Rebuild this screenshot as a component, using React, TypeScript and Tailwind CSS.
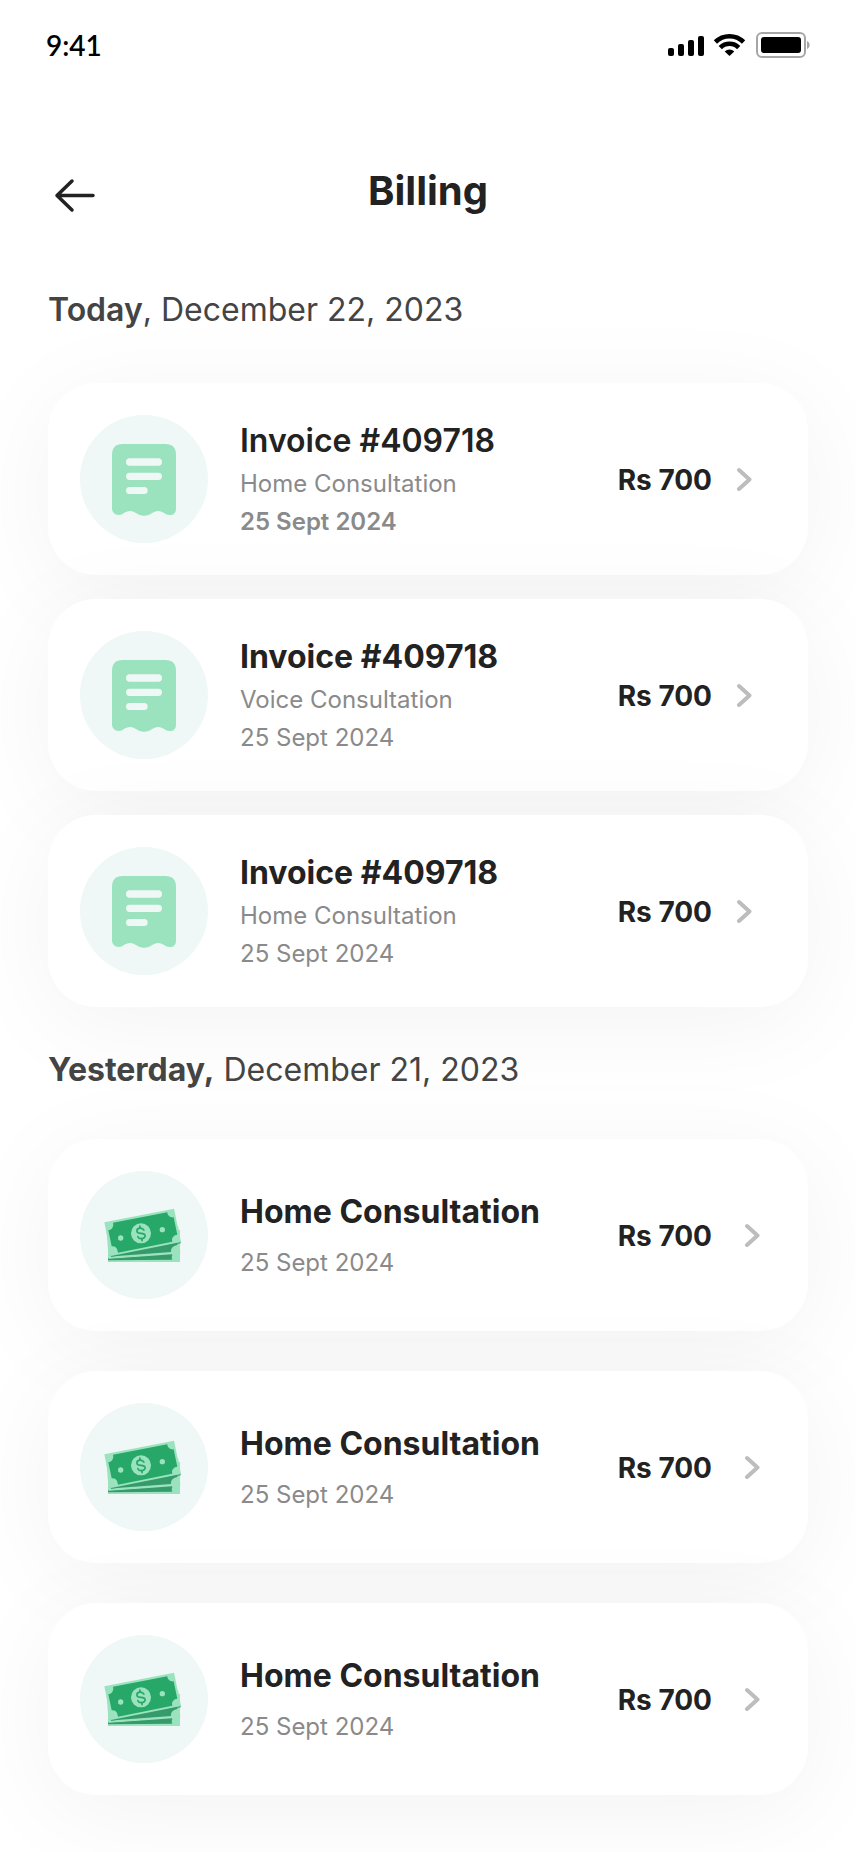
import React from "react";

type Entry = {
  title: string;
  detail?: string;
  date: string;
  amount: string;
  unread?: boolean;
};

const today: Entry[] = [
  { title: "Invoice #409718", detail: "Home Consultation", date: "25 Sept 2024", amount: "Rs 700", unread: true },
  { title: "Invoice #409718", detail: "Voice Consultation", date: "25 Sept 2024", amount: "Rs 700" },
  { title: "Invoice #409718", detail: "Home Consultation", date: "25 Sept 2024", amount: "Rs 700" },
];

const yesterday: Entry[] = [
  { title: "Home Consultation", date: "25 Sept 2024", amount: "Rs 700" },
  { title: "Home Consultation", date: "25 Sept 2024", amount: "Rs 700" },
  { title: "Home Consultation", date: "25 Sept 2024", amount: "Rs 700" },
];

function ReceiptIcon() {
  return (
    <svg viewBox="-30 -15 384 384" className="size-32 shrink-0" aria-hidden="true">
      <circle cx="162" cy="177" r="192" fill="#eff8f6" />
      <path
        d="M98 72H226Q258 72 258 104V266C258 278 250 285 240 285C224 285 220 273 205 273C188 273 184 287 162 287C142 287 136 273 120 273C104 273 100 285 86 285C74 285 66 277 66 265V104Q66 72 98 72Z"
        fill="#9be3be"
      />
      <rect x="108" y="115" width="108" height="22" rx="11" fill="#eff8f6" />
      <rect x="108" y="158" width="108" height="22" rx="11" fill="#eff8f6" />
      <rect x="108" y="201" width="65" height="21" rx="10.5" fill="#eff8f6" />
    </svg>
  );
}

function CashIcon() {
  return (
    <svg viewBox="-30 -57 384 384" className="size-32 shrink-0" aria-hidden="true">
      <circle cx="162" cy="135" r="192" fill="#eff8f6" />
      <path d="M54 120H270V216H54Z" fill="#9be3be" />
      <path d="M54 205L248 196C245 199 244 204 247 209L54 211Z" fill="#369b6b" />
      <path d="M50 125L265 110L271 191L56 207Z" fill="#9be3be" />
      <path d="M72 199L243 186C242 176 248 168 262 165L262 155L72 190Z" fill="#369b6b" />
      <path d="M56 207L246 193V197L56 210Z" fill="#369b6b" />
      <path d="M62 196L272 155L272 160L64 201Z" fill="#369b6b" />
      <path d="M43 97L252 56L273 156L63 198Z" fill="#9be3be" />
      <path
        d="M69 98L232 67C232 76 241 84 251 82L262 134C250 136 244 144 247 155L84 188C83 175 75 166 65 169L55 121C66 119 72 109 69 98Z"
        fill="#27a868"
      />
      <circle cx="153" cy="130" r="30" fill="#9be3be" />
      <circle cx="92" cy="144" r="8" fill="#9be3be" />
      <circle cx="217" cy="119" r="8" fill="#9be3be" />
      <g fill="none" stroke="#27a868" strokeWidth="5" strokeLinecap="round" transform="rotate(-9 153 130)">
        <path d="M163 122C161 116 157 114 152 114C146 114 142 117 142 122C142 134 164 126 164 138C164 143 159 146 153 146C147 146 143 143 142 138" />
        <path d="M153 108V114M153 146V152" />
      </g>
    </svg>
  );
}

function Chevron() {
  return (
    <svg viewBox="0 0 16 24" className="h-6 w-4 shrink-0" fill="none" stroke="#bdbdbd" strokeWidth="4" strokeLinecap="round" strokeLinejoin="round" aria-hidden="true">
      <path d="M3 3L13.500 12.500L3 22" />
    </svg>
  );
}

function EntryCard({ entry, cash }: { entry: Entry; cash?: boolean }) {
  return (
    <li>
      <a
        href="#details"
        className={`flex items-center rounded-[48px] bg-white py-8 pl-8 shadow-[0_16px_100px_rgba(0,0,0,0.05)] ${cash ? "pr-12" : "pr-14"}`}
      >
        {cash ? <CashIcon /> : <ReceiptIcon />}
        <div className={`ml-8 flex min-w-0 flex-1 flex-col pt-0.5 ${cash ? "gap-2.5" : "gap-0.5"}`}>
          <h3 className={`text-[32px] leading-[44px] text-[#222222] ${entry.unread ? "font-semibold" : "font-bold"}`}>
            {entry.title}
          </h3>
          <div className="text-2xl leading-[38px] text-[#8a8a8a]">
            {entry.detail && <p>{entry.detail}</p>}
            <p className={entry.unread ? "font-semibold" : ""}>{entry.date}</p>
          </div>
        </div>
        <span className={`shrink-0 pt-0.5 text-[28px] leading-9 font-bold text-[#222222] ${cash ? "mr-8" : "mr-6"}`}>
          {entry.amount}
        </span>
        <Chevron />
      </a>
    </li>
  );
}

function StatusBar() {
  return (
    <div className="flex h-[90px] items-center justify-between px-[46px]">
      <span className="font-['Lato',sans-serif] text-[28px] leading-9 font-semibold text-black">9:41</span>
      <svg viewBox="0 0 144 30" className="h-[30px] w-36" role="img" aria-label="Signal, Wi-Fi and battery">
        <rect x="2" y="18" width="6" height="8" rx="2" />
        <rect x="12" y="14" width="6" height="12" rx="2" />
        <rect x="22" y="10" width="6" height="16" rx="2" />
        <rect x="32" y="6" width="6" height="20" rx="2" />
        <g fill="none" stroke="#000" strokeWidth="4.6">
          <path d="M49.400 12A20 20 0 0 1 77.600 12" />
          <path d="M54.300 17.500A13 13 0 0 1 72.700 17.500" />
        </g>
        <path d="M58.700 21.500A6.500 6.500 0 0 1 68.300 21.500L63.500 26Z" />
        <rect x="91" y="3" width="48" height="24" rx="5" fill="none" stroke="#a6a6a6" strokeWidth="2" />
        <rect x="95" y="7" width="40" height="16" rx="3" />
        <path d="M141 11C144.500 12.500 144.500 17.500 141 19Z" fill="#a6a6a6" />
      </svg>
    </div>
  );
}

export default function App() {
  return (
    <div className="min-h-screen overflow-hidden bg-white pb-14 font-['Inter',sans-serif]">
      <StatusBar />
      <header className="mt-[77px] grid grid-cols-[48px_1fr_48px] items-center px-12">
        <button type="button" aria-label="Back" className="size-12">
          <svg viewBox="0 0 48 48" className="size-12" fill="none" stroke="#222222" strokeWidth="3.5" strokeLinecap="round" strokeLinejoin="round" aria-hidden="true">
            <path d="M45 28.500H9M24 14L9 28.500L24 43" />
          </svg>
        </button>
        <h1 className="text-center text-[40px] leading-12 font-bold text-[#222222]">Billing</h1>
      </header>
      <main className="px-12">
        <section className="pt-[75px]">
          <h2 className="text-[32px] leading-10 font-normal text-[#444444]">
            <strong className="font-semibold">Today</strong>, December 22, 2023
          </h2>
          <ul className="mt-[53px] flex flex-col gap-6">
            {today.map((entry, i) => (
              <EntryCard key={i} entry={entry} />
            ))}
          </ul>
        </section>
        <section className="pt-[43px]">
          <h2 className="text-[32px] leading-10 font-normal text-[#444444]">
            <strong className="font-bold">Yesterday,</strong> December 21, 2023
          </h2>
          <ul className="mt-[49px] flex flex-col gap-10">
            {yesterday.map((entry, i) => (
              <EntryCard key={i} entry={entry} cash />
            ))}
          </ul>
        </section>
      </main>
    </div>
  );
}
